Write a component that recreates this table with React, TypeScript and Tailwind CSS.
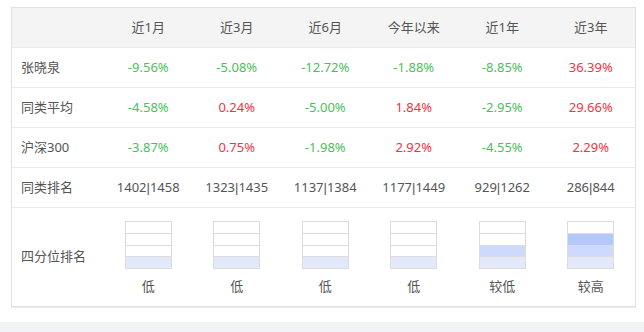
const cols = ["近1月", "近3月", "近6月", "今年以来", "近1年", "近3年"];

const rows: { name: string; values: string[] }[] = [
  { name: "张晓泉", values: ["-9.56%", "-5.08%", "-12.72%", "-1.88%", "-8.85%", "36.39%"] },
  { name: "同类平均", values: ["-4.58%", "0.24%", "-5.00%", "1.84%", "-2.95%", "29.66%"] },
  { name: "沪深300", values: ["-3.87%", "0.75%", "-1.98%", "2.92%", "-4.55%", "2.29%"] },
];

const ranks = [
  ["1402", "1458"],
  ["1323", "1435"],
  ["1137", "1384"],
  ["1177", "1449"],
  ["929", "1262"],
  ["286", "844"],
];

// level: how many quarters are filled from the bottom
const quartiles: { label: string; level: number }[] = [
  { label: "低", level: 1 },
  { label: "低", level: 1 },
  { label: "低", level: 1 },
  { label: "低", level: 1 },
  { label: "较低", level: 2 },
  { label: "较高", level: 3 },
];

const fills = ["bg-[#e3e9fb]", "bg-[#cddafd]", "bg-[#b3c9fc]", "bg-[#9ab7fb]"];
const heights = ["h-[11px]", "h-[11px]", "h-[12px]", "h-[12px]"];

function QuartileBox({ level }: { level: number }) {
  // top to bottom segments
  const segs = [3, 2, 1, 0];
  return (
    <div className="w-[47px] border border-[#dcdcdc] flex flex-col">
      {segs.map((i) => (
        <div
          key={i}
          className={`${heights[i]} ${i > 0 ? "border-b border-[#dcdcdc]" : ""} ${
            i < level ? fills[i] : "bg-white"
          }`}
        />
      ))}
    </div>
  );
}

function valueColor(v: string) {
  return v.startsWith("-") ? "text-[#4cbf5b]" : "text-[#f4333f]";
}

export default function App() {
  const grid = "grid grid-cols-[92px_repeat(6,1fr)]";
  return (
    <div
      className="w-[644px] h-[332px] bg-white flex flex-col text-[13px] text-[#555]"
      style={{ fontFamily: '"Noto Sans", "Noto Sans CJK SC", sans-serif' }}
    >
      <div className="ml-[11px] mt-[7px] w-[625px] border border-[#e0e0e0] shadow-[0_1px_0_#ececec]">
        <div className={`${grid} h-10 items-center bg-[#f4f4f4] border-b border-[#ebebeb]`}>
          <div />
          {cols.map((c) => (
            <div key={c} className="text-center">
              {c}
            </div>
          ))}
        </div>

        {rows.map((r) => (
          <div key={r.name} className={`${grid} h-10 items-center border-b border-[#ebebeb]`}>
            <div className="pl-[9px]">{r.name}</div>
            {r.values.map((v, i) => (
              <div key={i} className={`text-center ${valueColor(v)}`}>
                {v}
              </div>
            ))}
          </div>
        ))}

        <div className={`${grid} h-10 items-center border-b border-[#ebebeb]`}>
          <div className="pl-[9px]">同类排名</div>
          {ranks.map(([a, b], i) => (
            <div key={i} className="text-center">
              {a}
              <span className="font-['Liberation_Sans',sans-serif]">|</span>
              {b}
            </div>
          ))}
        </div>

        <div className={`${grid} h-[98px] items-center`}>
          <div className="pl-[9px]">四分位排名</div>
          {quartiles.map((q, i) => (
            <div key={i} className="flex flex-col items-center pt-[2px]">
              <QuartileBox level={q.level} />
              <div className="mt-[8px] leading-[18px]">{q.label}</div>
            </div>
          ))}
        </div>
      </div>

      <div className="flex-1" />
      <div className="h-[10px] bg-[#f2f3f7]" />
    </div>
  );
}
